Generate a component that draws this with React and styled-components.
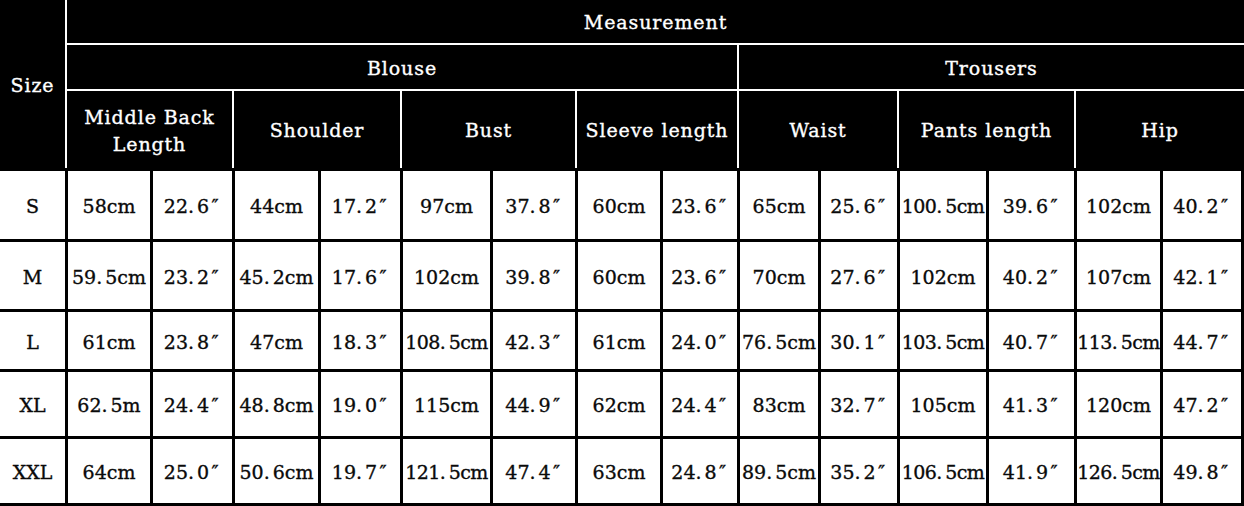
import React from "react";
import styled, { createGlobalStyle } from "styled-components";

const Global = createGlobalStyle`
  html, body { margin: 0; padding: 0; background: #ffffff; }
  body { width: 1244px; height: 506px; overflow: hidden; }
`;

const Chart = styled.div`
  display: grid;
  width: 1244px;
  grid-template-columns: 65px 85px 82px 86px 82px 90px 85px 85px 77px 81px 79px 89px 88px 86px 84px;
  grid-template-rows: 43px 46px 79px 71px 70px 60px 67px 70px;
  font-family: "DejaVu Serif", "Liberation Serif", serif;
  font-size: 19px;
  font-weight: 400;
  -webkit-text-stroke: 0.35px currentColor;
`;

const HeadCell = styled.div`
  box-sizing: border-box;
  background: #000;
  color: #fff;
  display: flex;
  align-items: center;
  justify-content: center;
  text-align: center;
  line-height: 27px;
  letter-spacing: 0.9px;
  grid-column: ${(p) => p.$col};
  grid-row: ${(p) => p.$row};
  border-left: ${(p) => (p.$left ? "2px solid #fff" : "none")};
  border-top: ${(p) => (p.$top ? "2px solid #fff" : "none")};
  padding: 2px ${(p) => p.$pad || 0}px 0;
  white-space: ${(p) => (p.$wrap ? "normal" : "nowrap")};
`;

const DataCell = styled.div`
  box-sizing: border-box;
  background: #fff;
  color: #0a0a0a;
  display: flex;
  align-items: center;
  justify-content: center;
  white-space: nowrap;
  overflow: hidden;
  padding-top: 2px;
  letter-spacing: ${(p) => (p.$tight ? "-0.6px" : "0")};
  border-top: 3px solid #000;
  border-left: ${(p) => (p.$first ? "none" : "3px solid #000")};
  border-right: ${(p) => (p.$last ? "3px solid #000" : "none")};
  border-bottom: ${(p) => (p.$bottom ? "3px solid #000" : "none")};
`;

const Dot = styled.span`
  display: inline-block;
  width: 9px;
  text-align: left;
`;

const Inch = styled.span`
  display: inline-block;
  width: 12px;
  text-align: center;
`;

const groups = [
  { label: "Middle Back Length", col: "2 / 4", wrap: true, pad: 10 },
  { label: "Shoulder", col: "4 / 6" },
  { label: "Bust", col: "6 / 8" },
  { label: "Sleeve length", col: "8 / 10" },
  { label: "Waist", col: "10 / 12" },
  { label: "Pants length", col: "12 / 14" },
  { label: "Hip", col: "14 / 16" },
];

const rows = [
  ["S", "58cm", "22.6″", "44cm", "17.2″", "97cm", "37.8″", "60cm", "23.6″", "65cm", "25.6″", "100.5cm", "39.6″", "102cm", "40.2″"],
  ["M", "59.5cm", "23.2″", "45.2cm", "17.6″", "102cm", "39.8″", "60cm", "23.6″", "70cm", "27.6″", "102cm", "40.2″", "107cm", "42.1″"],
  ["L", "61cm", "23.8″", "47cm", "18.3″", "108.5cm", "42.3″", "61cm", "24.0″", "76.5cm", "30.1″", "103.5cm", "40.7″", "113.5cm", "44.7″"],
  ["XL", "62.5m", "24.4″", "48.8cm", "19.0″", "115cm", "44.9″", "62cm", "24.4″", "83cm", "32.7″", "105cm", "41.3″", "120cm", "47.2″"],
  ["XXL", "64cm", "25.0″", "50.6cm", "19.7″", "121.5cm", "47.4″", "63cm", "24.8″", "89.5cm", "35.2″", "106.5cm", "41.9″", "126.5cm", "49.8″"],
];

function Value({ v }) {
  const inch = v.endsWith("″");
  const body = inch ? v.slice(0, -1) : v;
  const parts = body.split(".");
  return (
    <span>
      {parts[0]}
      {parts.length > 1 && (
        <>
          <Dot>.</Dot>
          {parts[1]}
        </>
      )}
      {inch && <Inch>″</Inch>}
    </span>
  );
}

export default function App() {
  return (
    <>
      <Global />
      <Chart>
        <HeadCell $col="1" $row="1 / 4">Size</HeadCell>
        <HeadCell $col="2 / 16" $row="1" $left>Measurement</HeadCell>
        <HeadCell $col="2 / 10" $row="2" $left $top>Blouse</HeadCell>
        <HeadCell $col="10 / 16" $row="2" $left $top>Trousers</HeadCell>
        {groups.map((g) => (
          <HeadCell key={g.label} $col={g.col} $row="3" $left $top $wrap={g.wrap} $pad={g.pad}>
            {g.label}
          </HeadCell>
        ))}
        {rows.map((r, ri) =>
          r.map((v, ci) => (
            <DataCell
              key={`${ri}-${ci}`}
              $first={ci === 0}
              $last={ci === r.length - 1}
              $bottom={ri === rows.length - 1}
              $tight={v.length >= 7}
            >
              <Value v={v} />
            </DataCell>
          ))
        )}
      </Chart>
    </>
  );
}
